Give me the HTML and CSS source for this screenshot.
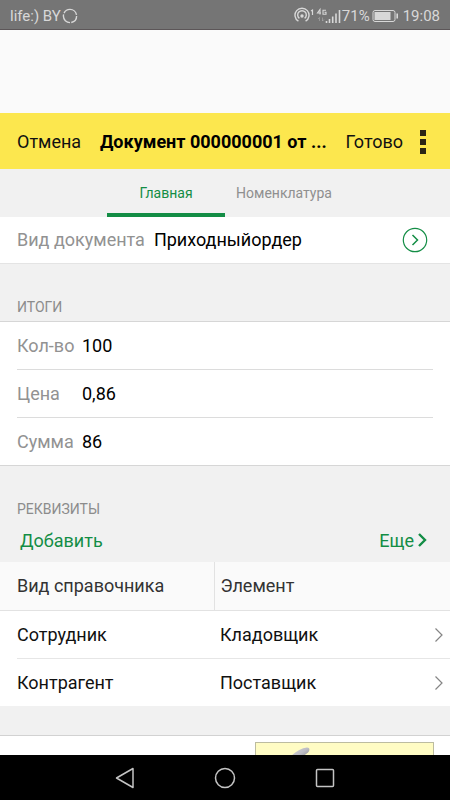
FILE: index.html
```html
<!DOCTYPE html>
<html lang="ru">
<head>
<meta charset="utf-8">
<meta name="viewport" content="width=device-width, initial-scale=1">
<title>Документ 000000001</title>
<link rel="stylesheet" href="styles.css">
</head>
<body>
<header class="status">
  <span class="carrier">life:) BY</span>
  <svg class="ring" width="16" height="16" viewBox="0 0 16 16" fill="none" stroke="currentColor" stroke-width="1.4"><circle cx="8" cy="8" r="6.6" stroke-dasharray="9 1.3 12 1.3 16.5 1.4"/></svg>
  <div class="status-right">
    <svg width="48" height="18" viewBox="0 0 48 18" fill="none" stroke="currentColor" stroke-width="1.4">
      <path d="M4.400 14.200A7 7 0 1 1 11.600 14.200M5.400 11.400A4.300 4.300 0 1 1 10.600 11.400"/>
      <circle cx="8" cy="9" r="1.700" fill="currentColor" stroke="none"/>
      <path d="M17 4l1.500-1v5" stroke-width="1.200"/>
      <path d="M26 7.500V2.500L23.500 6h3.500M32 3.200h-3v4h3V5.300h-1.500" stroke-width="1.100"/>
      <path d="M25.500 14v-3.500l-1.500 1.500M28.500 10.500V14l1.500-1.500" opacity=".35" stroke-width="1"/>
      <path d="M32.500 16v-2M35.500 16v-4M38.700 16V9.500M42 16V6.500M45.500 16V3" stroke-width="1.600"/>
    </svg>
    <span>71%</span>
    <svg class="battery" width="27" height="14" viewBox="0 0 27 14" fill="none" stroke="currentColor"><rect x="1" y="1.500" width="22" height="11" rx="2"/><rect x="3" y="3.500" width="15" height="7" fill="currentColor"/><path d="M25.200 4.500v5" stroke-width="1.600"/></svg>
    <span>19:08</span>
  </div>
</header>
<main class="screen">
  <div class="spacer"></div>
  <div class="toolbar">
    <button type="button">Отмена</button>
    <h1>Документ 000000001 от ...</h1>
    <button type="button">Готово</button>
    <button type="button" class="menu" aria-label="Меню"><svg width="6" height="26" viewBox="0 0 6 26" fill="#2b2615"><path d="M0 1h6v6H0zM0 10h6v6H0zM0 19h6v6H0z"/></svg></button>
  </div>
  <nav class="tabs">
    <button type="button" class="tab active">Главная</button>
    <button type="button" class="tab">Номенклатура</button>
  </nav>
  <section class="field kind">
    <label for="kind">Вид документа</label>
    <input id="kind" value="Приходныйордер">
    <button type="button" aria-label="Открыть"><svg width="26" height="26" viewBox="0 0 26 26" fill="none" stroke="#138d45"><circle cx="13" cy="13" r="11.700" stroke-width="1.200"/><path d="M10.500 8l5 5-5 5" stroke-width="1.500"/></svg></button>
  </section>
  <h2>ИТОГИ</h2>
  <section class="totals">
    <div class="field"><label for="qty">Кол-во</label><input id="qty" value="100"></div>
    <div class="field"><label for="price">Цена</label><input id="price" value="0,86"></div>
    <div class="field"><label for="sum">Сумма</label><input id="sum" value="86"></div>
  </section>
  <h2>РЕКВИЗИТЫ</h2>
  <div class="commands">
    <button type="button">Добавить</button>
    <button type="button">Еще<svg width="11" height="16" viewBox="0 0 11 16" fill="none" stroke="currentColor" stroke-width="2.400"><path d="M2 1l6 6-6 6"/></svg></button>
  </div>
  <table>
    <thead><tr><th>Вид справочника</th><th>Элемент</th></tr></thead>
    <tbody>
      <tr><td>Сотрудник</td><td><div class="cell">Кладовщик<svg width="10" height="16" viewBox="0 0 10 16" fill="none" stroke="#858585" stroke-width="1.200"><path d="M1.500 1.500L8 8l-6.500 6.500"/></svg></div></td></tr>
      <tr><td>Контрагент</td><td><div class="cell">Поставщик<svg width="10" height="16" viewBox="0 0 10 16" fill="none" stroke="#858585" stroke-width="1.200"><path d="M1.500 1.500L8 8l-6.500 6.500"/></svg></div></td></tr>
    </tbody>
  </table>
  <section class="preview">
    <div class="picture">
      <svg width="30" height="20" viewBox="0 0 30 20"><defs><linearGradient id="metal" x1="0" y1="0" x2="1" y2="1"><stop offset="0" stop-color="#d4d4d8"/><stop offset=".5" stop-color="#bcbcc4"/><stop offset="1" stop-color="#777"/></linearGradient></defs><path d="M0 14C5 9 11 5 17 4.500c3 0 3 3 1 5L7 18z" fill="url(#metal)"/></svg>
    </div>
  </section>
</main>
<footer class="system">
  <button type="button" aria-label="Назад"><svg width="22" height="24" viewBox="0 0 22 24"><path d="M19 2.500v19L2.500 12z"/></svg></button>
  <button type="button" aria-label="Домой"><svg width="22" height="24" viewBox="0 0 22 24"><circle cx="11" cy="12" r="9.500"/></svg></button>
  <button type="button" aria-label="Недавние"><svg width="22" height="24" viewBox="0 0 22 24"><rect x="2.500" y="3.500" width="17" height="17" rx="1"/></svg></button>
</footer>
</body>
</html>
```
FILE: styles.css
```css
* { box-sizing: border-box; }
body {
  margin: 0;
  height: 100vh;
  display: flex;
  flex-direction: column;
  background: #f1f1f1;
  color: #111;
  font: 18px/24px Roboto, sans-serif;
}
button, input {
  margin: 0;
  padding: 0;
  border: 0;
  background: none;
  color: inherit;
  font: inherit;
}
svg { display: block; flex: none; }

.status {
  flex: none;
  display: flex;
  align-items: center;
  height: 30px;
  padding: 2px 10px 0;
  background: #757575;
  border-bottom: 1px solid #5c5658;
  color: #d8d8d8;
  font-size: 15px;
}
.ring { margin-left: 1px; }
.status-right { display: flex; align-items: center; margin-left: auto; }
.battery { margin: 0 4px 0 2px; }

.screen { flex: 1; min-height: 0; overflow: hidden; }
.spacer { height: 83px; background: #fafafa; }
.toolbar {
  display: flex;
  align-items: center;
  height: 56px;
  padding: 2px 17px 0;
  background: #fce74e;
}
.toolbar h1 {
  flex: 1;
  margin: 0;
  white-space: nowrap;
  text-align: center;
  color: #000;
  font-size: 18px;
  font-weight: 700;
}
.toolbar .menu { margin: 0 7px 0 17px; }

.tabs { display: flex; justify-content: center; height: 48px; }
.tab {
  width: 118px;
  border-top: 4px solid transparent;
  border-bottom: 4px solid transparent;
  color: #8f8f8f;
  font-size: 14px;
}
.tab.active { border-bottom-color: #138d45; color: #138d45; }

.field { display: flex; align-items: center; height: 48px; }
.field label { color: #929292; }
.field input { flex: 1; min-width: 0; color: #000; }
.kind {
  height: 47px;
  padding: 0 22px 0 17px;
  gap: 9px;
  background: #fff;
  border-bottom: 1px solid #e4e4e4;
}

h2 {
  margin: 0;
  padding: 31px 17px 2px;
  color: #8c8c8c;
  font-size: 14px;
  font-weight: 400;
}
.totals {
  padding: 0 17px;
  background: #fff;
  border: solid #d6d6d6;
  border-width: 1px 0;
}
.totals label { width: 65px; }
.totals .field:first-child { height: 47px; }
.totals .field + .field { border-top: 1px solid #dcdcdc; }

.commands {
  display: flex;
  justify-content: space-between;
  height: 39px;
  padding: 0 22px 4px 20px;
  color: #138d45;
}
.commands button { display: flex; align-items: center; gap: 3px; }

table { width: 100%; border-collapse: collapse; table-layout: fixed; background: #fff; }
th, td { height: 48px; padding: 1px 6px 0; text-align: left; font-weight: 400; }
th:first-child, td:first-child { width: 214px; padding-left: 17px; }
th { background: #fafafa; border-bottom: 1px solid #e2e2e2; color: #333; }
th:first-child { border-right: 1px solid #e2e2e2; }
tbody tr + tr {
  background: linear-gradient(#e6e6e6, #e6e6e6) 17px 0 / 100% 1px no-repeat;
}
.cell { display: flex; align-items: center; justify-content: space-between; }

.preview {
  height: 140px;
  margin-top: 29px;
  padding: 6px 16px;
  background: #fff;
  border-top: 1px solid #d2d2d2;
}
.picture {
  width: 179px;
  height: 120px;
  margin-left: auto;
  padding-left: 34px;
  background: #fffcc4;
  border: 1px solid #bcbca0;
}

.system {
  flex: none;
  display: flex;
  align-items: center;
  justify-content: center;
  gap: 78px;
  height: 45px;
  background: #000;
}
.system svg { fill: none; stroke: #c4c4c4; stroke-width: 1.5; stroke-linejoin: round; }
```
